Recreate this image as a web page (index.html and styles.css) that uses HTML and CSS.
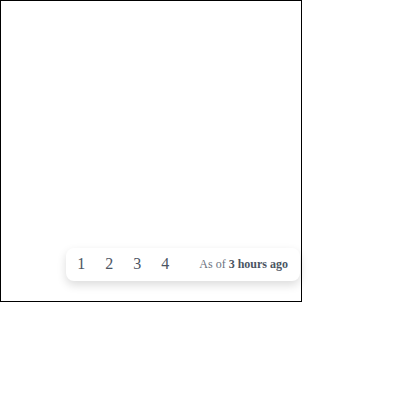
FILE: index.html
```html
<!DOCTYPE html>
<html>
<head>
<meta charset="utf-8">
<link rel="stylesheet" href="styles.css">
</head>
<body>
<div class="frame">
  <div class="card">
    <div class="pages">
      <span class="page">1</span>
      <span class="page">2</span>
      <span class="page">3</span>
      <span class="page">4</span>
    </div>
    <div class="stamp">As of <b>3 hours ago</b></div>
  </div>
</div>
</body>
</html>
```
FILE: styles.css
```css
html, body {
  margin: 0;
  padding: 0;
  background: #fff;
}
.frame {
  position: relative;
  width: 300px;
  height: 300px;
  border: 1px solid #000;
  font-family: "Liberation Serif", serif;
}
.card {
  position: absolute;
  right: 1px;
  bottom: 20px;
  height: 33px;
  box-sizing: border-box;
  display: flex;
  align-items: center;
  padding: 0 12px 0 11px;
  background: #fff;
  border-radius: 8px;
  box-shadow: 0 4px 10px rgba(0,0,0,0.14);
}
.pages {
  display: flex;
  gap: 20px;
  font-size: 16px;
  line-height: 1;
  color: #4b5563;
  padding-bottom: 1px;
}
.stamp {
  margin-left: 30px;
  font-size: 12px;
  color: #6b7280;
}
.stamp b {
  color: #4b5563;
  font-weight: 700;
}
```
